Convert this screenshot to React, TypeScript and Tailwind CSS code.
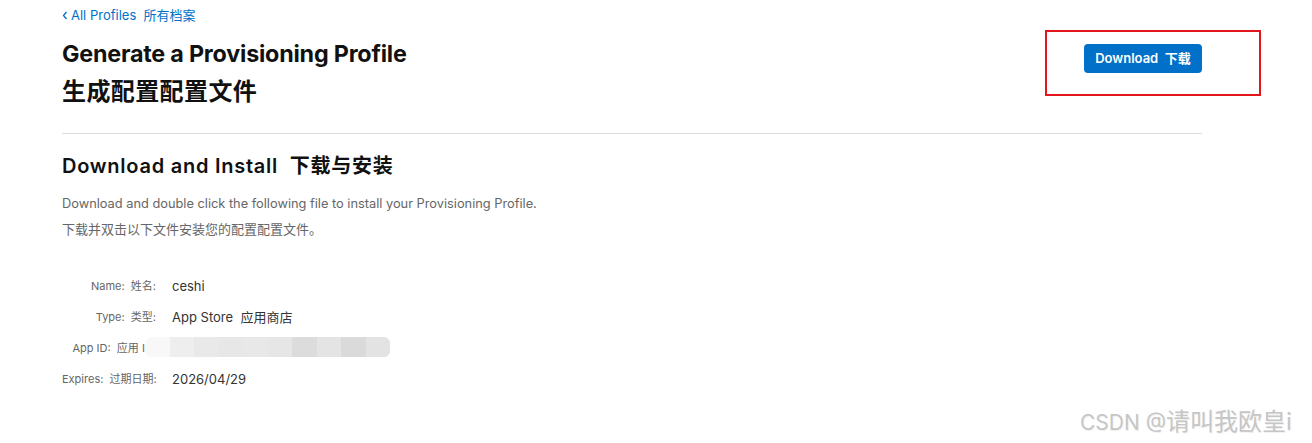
const font = { fontFamily: 'Inter, "Noto Sans CJK SC", sans-serif' };

const rows = [
  { label: 'Name:  姓名:', value: 'ceshi' },
  { label: 'Type:  类型:', value: 'App Store  应用商店' },
  { label: 'App ID:  应用 ID:', value: '' },
  { label: 'Expires:  过期日期:', value: '2026/04/29' },
];

const blur = ['#f8f8f8', '#eeeeee', '#e9e9e9', '#e7e7e7', '#e8e8e8', '#e6e6e6', '#dcdcdc', '#e4e4e4', '#dadada', '#e3e3e3'];

export default function App() {
  return (
    <div className="relative w-[1312px] h-[443px] overflow-hidden bg-white" style={font}>
      <div className="ml-[62px] w-[1140px] pt-[6px]">
        {/* Back link */}
        <a className="flex items-center text-[13px] leading-[18px] text-[#0070c9]">
          <svg width="6" height="9" viewBox="0 0 6 9" className="mr-[3px] mt-[1px]">
            <path d="M4.5 1 L1.5 4.5 L4.5 8" fill="none" stroke="currentColor" strokeWidth="1.3" />
          </svg>
          <span className="whitespace-pre">All Profiles  所有档案</span>
        </a>

        {/* Header */}
        <div className="flex items-start justify-between mt-[11px]">
          <h1 className="text-[23.3px] leading-[38px] font-bold text-[#111] tracking-[-0.2px]">
            Generate a Provisioning Profile
            <br />
            <span className="text-[24px] tracking-[0.4px]">生成配置配置文件</span>
          </h1>
          <button className="mt-[9px] h-[29px] w-[118px] rounded-[4px] bg-[#0070c9] text-[13px] font-semibold text-white whitespace-pre">
            Download  下载
          </button>
        </div>

        <div className="mt-[22px] h-px bg-[#dcdcdc]" />

        {/* Download and install */}
        <h2 className="mt-[19px] text-[20px] leading-[26px] font-semibold text-[#111] whitespace-pre tracking-[0.75px]">
          Download and Install  下载与安装
        </h2>
        <p className="mt-[16px] text-[12.8px] leading-[18px] text-[#666]">
          Download and double click the following file to install your Provisioning Profile.
        </p>
        <p className="mt-[7px] text-[13px] leading-[18px] text-[#666]">下载并双击以下文件安装您的配置配置文件。</p>

        {/* Details */}
        <div className="mt-[39px] flex flex-col gap-[12px]">
          {rows.map((r) => (
            <div key={r.label} className="flex items-center h-[19px]">
              <span className="w-[94px] text-right text-[11px] text-[#666] whitespace-pre">{r.label}</span>
              <span className="ml-[16px] text-[13px] text-[#333] whitespace-pre">{r.value}</span>
            </div>
          ))}
        </div>
      </div>

      {/* blurred app id */}
      <div className="absolute left-[145px] top-[337px] flex h-[20px] rounded-[6px] overflow-hidden">
        {blur.map((c, i) => (
          <div key={i} className="w-[24.5px] h-full" style={{ background: c }} />
        ))}
      </div>

      {/* annotation */}
      <div className="absolute left-[1045px] top-[30px] w-[216px] h-[66px] border-2 border-[#e3161e]" />

      {/* watermark */}
      <div
        className="absolute left-[1080px] top-[404px] text-[21px] text-[#c6c6c6] whitespace-nowrap"
        style={{ textShadow: '1px 1px 1px #f0f0f0' }}
      >
        CSDN @<span className="text-[24px]">请叫我欧皇i</span>
      </div>
    </div>
  );
}
